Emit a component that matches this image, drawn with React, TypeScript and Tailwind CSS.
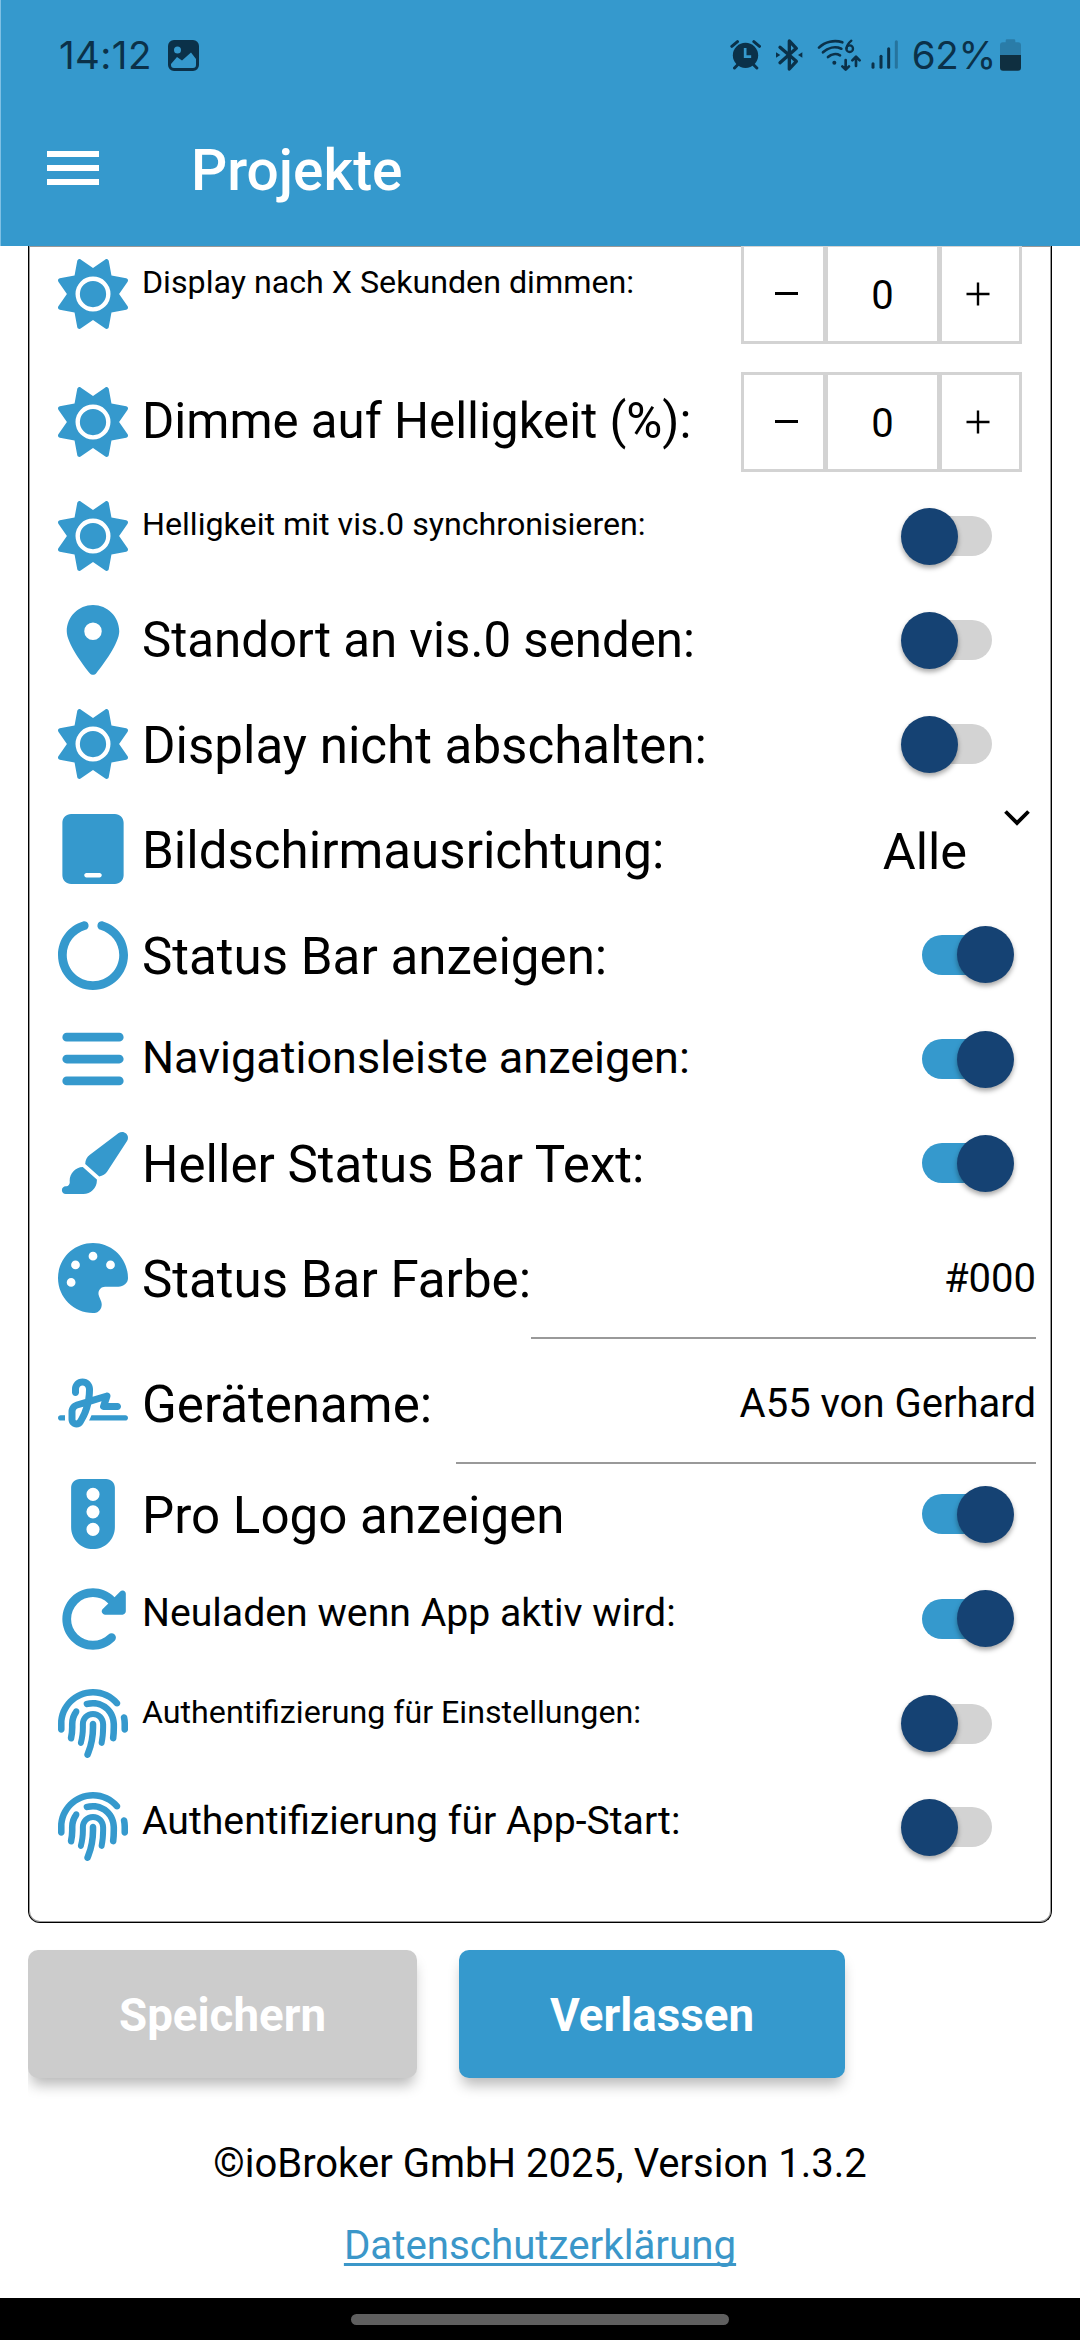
import { ReactNode, useState } from "react";
import { IconType } from "react-icons";
import {
  FaBars,
  FaCircleNotch,
  FaFingerprint,
  FaLocationDot,
  FaPaintbrush,
  FaPalette,
  FaRotateRight,
  FaSignature,
  FaSun,
  FaTablet,
  FaTrafficLight,
} from "react-icons/fa6";
import clsx from "clsx";

// Long labels shrink so they always stay on one line
const labelSizes = {
  sm: "text-[32.2px] pb-[23px]",
  md: "text-[39.2px] pb-2.5",
  lg: "text-[45px] pb-1",
  xl: "text-[49.2px] pt-px",
  "2xl": "text-[51.1px] pt-1",
};

export default function App() {
  return (
    <div className="flex h-[2340px] w-[1080px] flex-col overflow-hidden bg-white font-[Roboto,sans-serif] text-black">
      <header className="h-[246px] shrink-0 border-l border-[#7fc0e4] bg-[#3599cd]">
        <StatusBar />
        <div className="flex h-[136px] items-center pb-5 pl-[46px]">
          <button aria-label="Menü" className="flex w-[52px] flex-col gap-2">
            <span className="h-1.5 bg-white" />
            <span className="h-1.5 bg-white" />
            <span className="h-1.5 bg-white" />
          </button>
          <h1 className="ml-[92px] pt-[7px] text-[56.8px] leading-none font-medium text-white">Projekte</h1>
        </div>
      </header>

      <main className="flex grow flex-col overflow-hidden px-7">
        <SettingsCard />

        <div className="-mr-7 flex h-[190px] shrink-0 gap-[42px] overflow-hidden pt-[27px]">
          <ActionButton className="w-[389px] bg-[#cccccc]">Speichern</ActionButton>
          <ActionButton className="w-[386px] bg-[#3599cd]">Verlassen</ActionButton>
        </div>

        <footer className="flex flex-col items-center text-[40px] leading-[60px]">
          <p className="mt-[21px]">©ioBroker GmbH 2025, Version 1.3.2</p>
          <a
            href="#"
            className="mt-[22px] text-[40.3px] text-[#3b97c9] underline decoration-[3px] underline-offset-[4px] [text-decoration-skip-ink:none]"
          >
            Datenschutzerklärung
          </a>
        </footer>
      </main>

      <div className="flex h-[42px] shrink-0 justify-center bg-black pt-4">
        <div className="h-[11px] w-[378px] rounded-full bg-[#5f5f5f]" />
      </div>
    </div>
  );
}

function SettingsCard() {
  return (
    <section className="h-[1677px] shrink-0 overflow-hidden rounded-b-xl border-x border-b border-black pl-[29px] pr-[15px] shadow-[inset_0_0_0_1px_#999]">
      <Row icon={FaSun} label="Display nach X Sekunden dimmen:" size="sm" className="-mt-[18px] h-[131px]">
        <Stepper />
      </Row>
      <Row icon={FaSun} label="Dimme auf Helligkeit (%):" size="xl" className="h-[125px]">
        <Stepper />
      </Row>
      <Row icon={FaSun} label="Helligkeit mit vis.0 synchronisieren:" size="sm" className="h-[104px]">
        <Toggle />
      </Row>
      <Row icon={FaLocationDot} label="Standort an vis.0 senden:" size="xl" className="h-[104px]">
        <Toggle />
      </Row>
      <Row icon={FaSun} label="Display nicht abschalten:" size="2xl" className="h-[104px]">
        <Toggle />
      </Row>
      <Row icon={FaTablet} label="Bildschirmausrichtung:" size="2xl" className="h-[106px]">
        <span className="ml-auto pt-1.5 text-[50.5px]">Alle</span>
        <svg viewBox="0 0 28 18" className="mt-[13px] mr-[5px] ml-[36px] h-[18px] w-[28px] self-start">
          <path d="M2.500 2.500 14 14 25.500 2.500" fill="none" stroke="currentColor" strokeWidth="3.8" />
        </svg>
      </Row>
      <Row icon={FaCircleNotch} label="Status Bar anzeigen:" size="2xl" className="h-[105px]">
        <Toggle defaultOn />
      </Row>
      <Row icon={FaBars} label="Navigationsleiste anzeigen:" size="lg" className="h-[104px]">
        <Toggle defaultOn />
      </Row>
      <Row icon={FaPaintbrush} label="Heller Status Bar Text:" size="2xl" className="h-[104px]">
        <Toggle defaultOn />
      </Row>
      <Row icon={FaPalette} label="Status Bar Farbe:" size="2xl" className="h-[126px]">
        <TextValue className="mb-0.5 pt-1.5">#000</TextValue>
      </Row>
      <Row icon={FaSignature} label="Gerätename:" size="2xl" className="h-[123px]">
        <TextValue className="ml-6 pt-1">A55 von Gerhard</TextValue>
      </Row>
      <Row icon={FaTrafficLight} label="Pro Logo anzeigen" size="2xl" className="h-[100px]">
        <Toggle defaultOn />
      </Row>
      <Row icon={FaRotateRight} label="Neuladen wenn App aktiv wird:" size="md" className="h-[109px]">
        <Toggle defaultOn />
      </Row>
      <Row icon={FaFingerprint} label="Authentifizierung für Einstellungen:" size="sm" className="h-[101px]">
        <Toggle />
      </Row>
      <Row icon={FaFingerprint} label="Authentifizierung für App-Start:" size="md" className="h-[106px]">
        <Toggle />
      </Row>
    </section>
  );
}

interface RowProps {
  icon: IconType;
  label: string;
  size: keyof typeof labelSizes;
  className: string;
  children: ReactNode;
}

function Row({ icon: Icon, label, size, className, children }: RowProps) {
  return (
    <div className={clsx("flex items-center", className)}>
      <Icon className="h-[70px] w-[70px] shrink-0 text-[#3599cd]" aria-hidden="true" />
      <span className={clsx("ml-3.5 leading-none whitespace-nowrap", labelSizes[size])}>{label}</span>
      {children}
    </div>
  );
}

function Toggle({ defaultOn = false }: { defaultOn?: boolean }) {
  const [on, setOn] = useState(defaultOn);
  return (
    <button
      role="switch"
      aria-checked={on}
      onClick={() => setOn(!on)}
      className={clsx(
        "mr-11 ml-auto flex h-10 w-[70px] items-center rounded-full",
        on ? "bg-[#3599cd]" : "bg-[#d3d3d3]"
      )}
    >
      <span
        className={clsx(
          "h-[57px] w-[57px] shrink-0 rounded-full bg-[#154273] shadow-[0_3px_5px_rgba(0,0,0,0.35)]",
          on ? "ml-[35px]" : "-ml-[21px]"
        )}
      />
    </button>
  );
}

function Stepper() {
  const [value, setValue] = useState(0);
  return (
    <div className="mr-3.5 ml-auto flex h-[100px] text-[40px]">
      <button
        aria-label="Weniger"
        onClick={() => setValue(Math.max(0, value - 1))}
        className="flex w-[85px] items-center justify-center border-[3px] border-[#d3d3d3] pl-[5px]"
      >
        <span className="h-[2.5px] w-[23px] bg-black" />
      </button>
      <span className="flex w-[113px] items-center justify-center border-x-2 border-y-3 border-[#d3d3d3] pt-1">
        {value}
      </span>
      <button
        aria-label="Mehr"
        onClick={() => setValue(value + 1)}
        className="flex w-[83px] items-center justify-center border-[3px] border-[#d3d3d3] pr-1.5"
      >
        <svg viewBox="0 0 24 24" className="h-6 w-6">
          <path d="M12 .5v23M.5 12h23" stroke="currentColor" strokeWidth="2.4" />
        </svg>
      </button>
    </div>
  );
}

function TextValue({ className, children }: { className: string; children: ReactNode }) {
  return (
    <div className={clsx("flex grow items-center justify-end self-stretch border-b-2 border-[#999] text-[40px]", className)}>
      {children}
    </div>
  );
}

function ActionButton({ className, children }: { className: string; children: ReactNode }) {
  return (
    <button
      className={clsx(
        "h-32 rounded-[10px] pt-1 text-[45.7px] font-bold text-white shadow-[0_10px_14px_-3px_rgba(0,0,0,0.28)]",
        className
      )}
    >
      {children}
    </button>
  );
}

function StatusBar() {
  return (
    <div className="flex h-[110px] items-center pr-[58px] pl-[58px] font-[Inter,sans-serif] text-[38.5px] text-[#0b3149]">
      <span className="w-[108px] pt-0.5 tracking-[0.4px]">14:12</span>
      <svg viewBox="0 0 34 34" className="h-[34px] w-[34px]">
        <path
          fillRule="evenodd"
          fill="currentColor"
          d="M7 2h19a6 6 0 0 1 6 6v19a6 6 0 0 1-6 6H7a6 6 0 0 1-6-6V8a6 6 0 0 1 6-6Zm-3 24v1a3 3 0 0 0 3 3h19a3 3 0 0 0 3-3v-6l-5-6.500-9 8-5-3.500Zm6.500-17.500a3.500 3.500 0 1 0 0 7 3.500 3.500 0 0 0 0-7Z"
        />
      </svg>

      {/* alarm */}
      <svg viewBox="24 24 92 102" className="ml-auto h-[34px] w-[31px]">
        <circle cx="70" cy="76" r="38" fill="currentColor" />
        <path d="m29 49 17-14M112 49 95 35M46 105l-9 9M95 105l9 9" stroke="currentColor" strokeWidth="9" strokeLinecap="round" />
        <path d="M69 54v26h18" fill="none" stroke="#3599cd" strokeWidth="8" />
      </svg>

      {/* bluetooth */}
      <svg viewBox="156 24 90 102" className="ml-[13px] h-[34px] w-[30px]">
        <path d="m174 52 49 42-21 23V33l21 22-49 43" fill="none" stroke="currentColor" strokeWidth="10" strokeLinejoin="round" strokeLinecap="round" />
        <path d="M162 67v16l13-8ZM241 67v16l-13-8Z" fill="currentColor" />
      </svg>

      {/* wifi 6 with traffic arrows */}
      <svg viewBox="282 24 138 102" className="ml-[12px] h-[34px] w-[46px]">
        <g fill="none" stroke="currentColor" strokeWidth="8" strokeLinecap="round">
          <path d="M291 53c18-18 46-24 70-16" />
          <path d="M303 67c15-14 36-19 55-11" />
          <path d="M318 81c10-9 25-11 36-5" />
          <path d="M388 32c-8 7-14 14-14 23" strokeWidth="7" />
          <circle cx="383" cy="56" r="10" strokeWidth="7" />
          <path d="M371 90v28M361 109l10 10 10-10M402 108V81M391 91l11-11 11 11" strokeLinejoin="round" />
        </g>
        <circle cx="337" cy="98" r="6" fill="currentColor" />
      </svg>

      {/* mobile signal */}
      <svg viewBox="444 24 87 102" className="ml-[8px] h-[34px] w-[29px]">
        <g fill="none" stroke="currentColor" strokeWidth="9" strokeLinecap="round">
          <path d="M453 101v11" />
          <path d="M477 79v33" />
          <path d="M500 56v56" />
          <path d="M523 35v77" opacity=".35" />
        </g>
      </svg>

      <span className="ml-[13px] pt-0.5 tracking-[-0.3px]">62%</span>
      <svg viewBox="837 24 69 102" className="ml-[3px] h-[34px] w-[23px]">
        <path d="M840 76V46q0-9 9-9h8v-5q0-4 4-4h21q4 0 4 4v5h8q9 0 9 9v30Z" fill="#2a7ca8" />
        <path d="M840 75h63v38q0 9-9 9h-45q-9 0-9-9Z" fill="#0f2f40" />
      </svg>
    </div>
  );
}
